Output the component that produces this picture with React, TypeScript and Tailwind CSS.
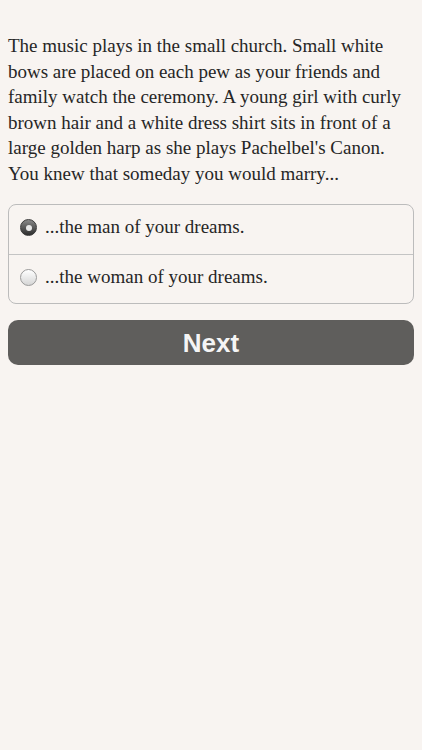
import { useState } from "react";

const lines = [
  "The music plays in the small church. Small white",
  "bows are placed on each pew as your friends and",
  "family watch the ceremony. A young girl with curly",
  "brown hair and a white dress shirt sits in front of a",
  "large golden harp as she plays Pachelbel's Canon.",
  "You knew that someday you would marry...",
];

const options = ["...the man of your dreams.", "...the woman of your dreams."];

const Radio = ({ on }: { on: boolean }) =>
  on ? (
    <span className="flex h-[17px] w-[17px] shrink-0 items-center justify-center rounded-full border border-[#3a3a3a] bg-gradient-to-b from-[#8a8a8a] to-[#2e2e2e]">
      <span className="h-[6px] w-[6px] rounded-full bg-[#e8e8e8]" />
    </span>
  ) : (
    <span className="h-[17px] w-[17px] shrink-0 rounded-full border border-[#9a9a9a] bg-gradient-to-b from-[#ffffff] to-[#d6d6d6]" />
  );

const App = () => {
  const [choice, setChoice] = useState(0);

  return (
    <div className="min-h-[750px] w-full bg-[#f8f4f1] px-2 pt-[33px] font-['Liberation_Serif',serif] text-[#262626]">
      {/* story text, broken as in the app */}
      <p className="text-[19px] leading-[25.6px]">
        {lines.map((l) => (
          <span key={l} className="block whitespace-nowrap">
            {l}
          </span>
        ))}
      </p>

      <div className="mt-[17px] overflow-hidden rounded-lg border border-[#bcbcbc]">
        {options.map((opt, i) => (
          <button
            key={opt}
            onClick={() => setChoice(i)}
            className={`flex h-[49px] w-full items-center gap-[8px] pb-[3px] pl-[11px] text-left text-[19px] ${
              i > 0 ? "border-t border-[#c4c4c4]" : ""
            }`}
          >
            <Radio on={choice === i} />
            {opt}
          </button>
        ))}
      </div>

      <button className="mt-4 flex h-[45px] w-full items-center justify-center rounded-[10px] bg-[#5f5e5c] pt-[2px] font-['Liberation_Sans',sans-serif] text-[26px] font-bold text-[#f5f5f5]">
        Next
      </button>
    </div>
  );
};

export default App;
